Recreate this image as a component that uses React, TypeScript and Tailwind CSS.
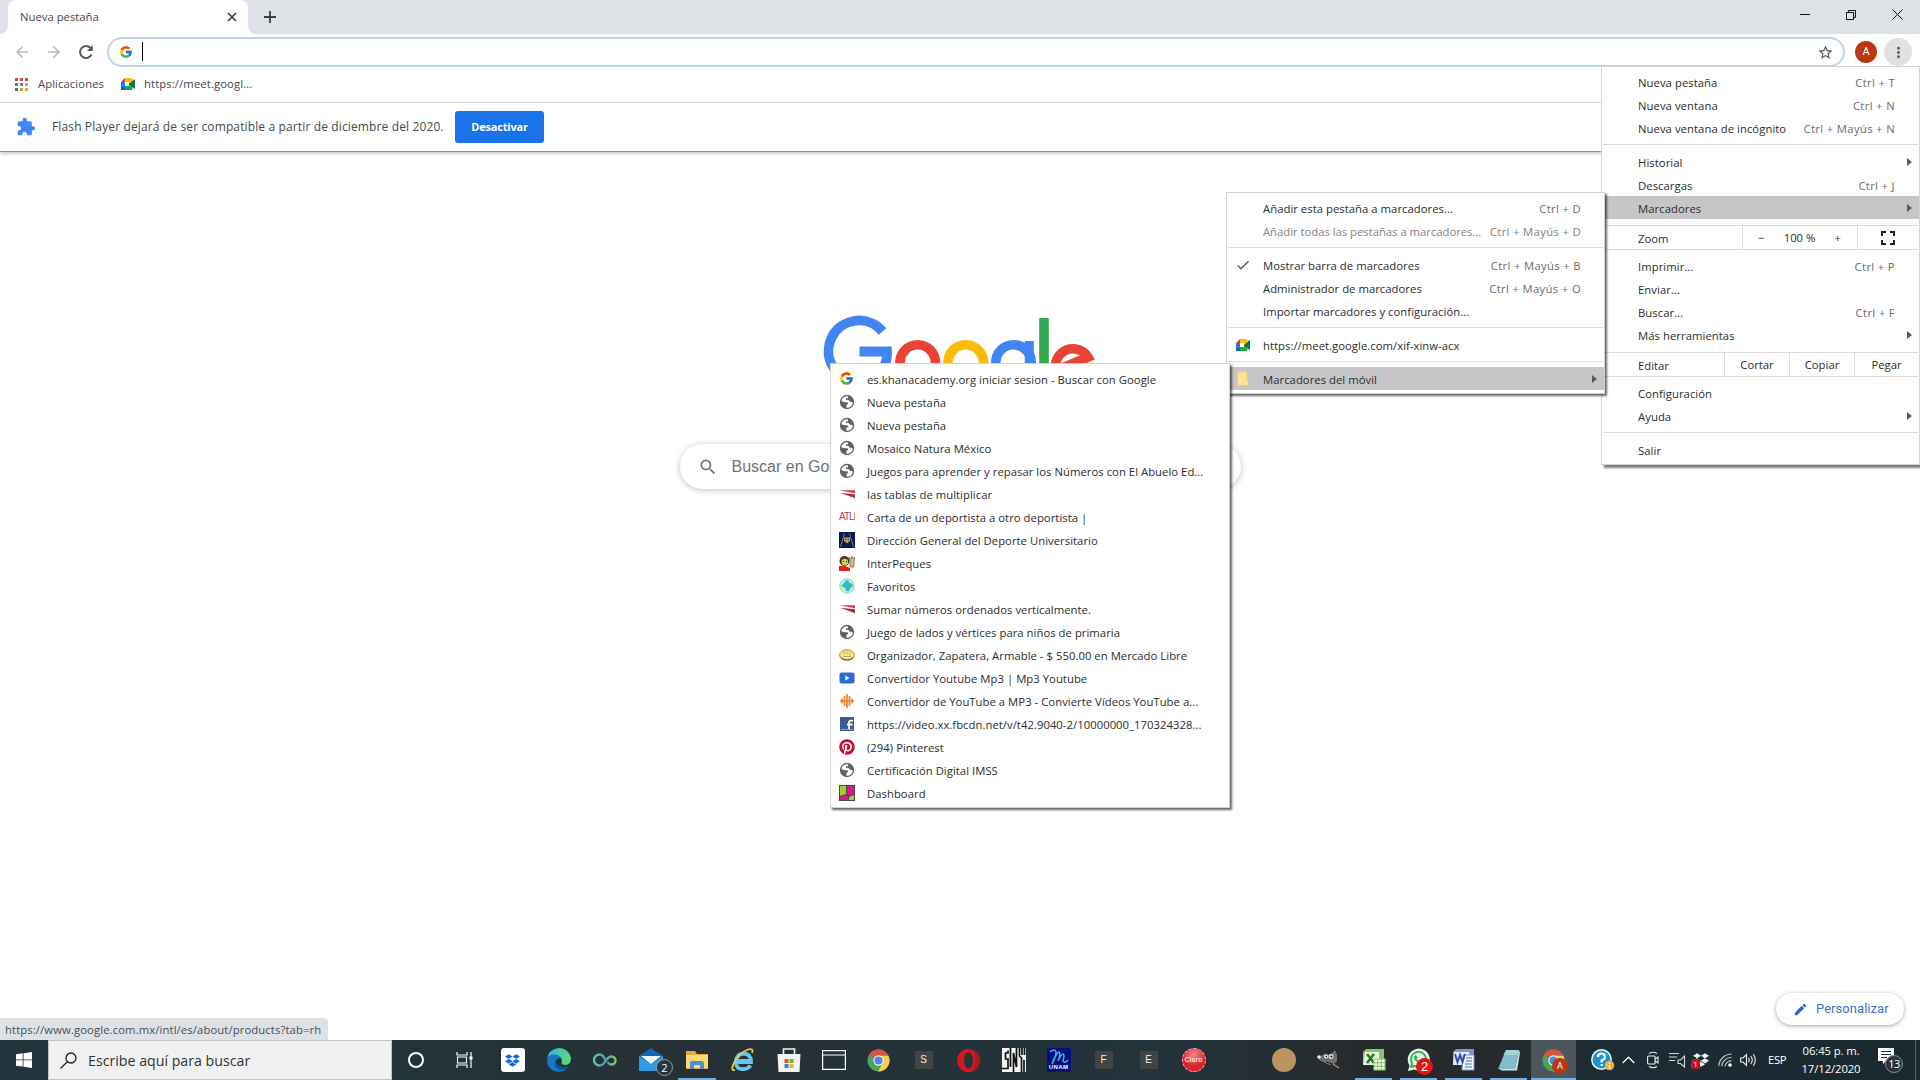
import React from "react";
import { FcGoogle } from "react-icons/fc";
import { FaDropbox, FaPinterest, FaWhatsapp } from "react-icons/fa";
import { MdSearch, MdStarBorder, MdEdit, MdExtension, MdCheck, MdArrowBack, MdArrowForward, MdMoreVert } from "react-icons/md";

const Meet = () => (
  <svg width="16" height="16" viewBox="0 0 16 16">
    <path d="M1 6 5 2v4z" fill="#e33b2e" />
    <path d="M5 2h6.5q1 0 1 1v4L9 9V6H5z" fill="#fbbc04" />
    <path d="M1 6h4v5H1z" fill="#2a74e8" />
    <path d="M1 11h4v3H2q-1 0-1-1z" fill="#1859c4" />
    <path d="M5 10h4V8l3.500-1v6q0 1-1 1H5z" fill="#1da64a" />
    <path d="M5 6h4v4H5z" fill="#fff" />
    <path d="M9 8l5-4.400q1-.6 1 .4v8q0 1-1 .4z" fill="#0c7a36" />
  </svg>
);

const ChromeLogo = ({ size = 22 }: { size?: number }) => (
  <svg width={size} height={size} viewBox="0 0 24 24">
    <circle cx="12" cy="12" r="11.5" fill="#4aa458" />
    <path d="M12 12 2 6.300A11.500 11.500 0 0 1 22 6.300L22.500 7H12z" fill="#d95246" />
    <path d="M12 7h10.400A11.500 11.500 0 0 1 11.500 23.500L16.500 14.500z" fill="#f7cf4d" />
    <circle cx="12" cy="12" r="5.400" fill="#f3f3f3" />
    <circle cx="12" cy="12" r="4.200" fill="#4a88ea" />
  </svg>
);

const Globe = () => (
  <svg width="16" height="16" viewBox="0 0 16 16">
    <circle cx="8" cy="8" r="7.200" fill="#5f6368" />
    <path d="M9 2.300C5.500 2 2.800 4 2.300 7.200L6 8.200h2.500l1 1.800-2 .8v2.900c3.600.2 6.200-2 6.300-5.500L11 7.800 9.500 6H7V4.600h2z" fill="#fff" />
  </svg>
);

const RedFlag = () => (
  <svg width="16" height="16" viewBox="0 0 16 16">
    <path d="M0 4.200h16v3z" fill="#c8404c" />
    <path d="M1 6.700 16 8.300v4z" fill="#b52f3d" />
  </svg>
);

const Atl = () => (
  <span className="block w-4 overflow-hidden whitespace-nowrap font-['Liberation_Sans'] text-[10px] leading-4 tracking-[-1px] text-[#b5424c]">ATLI</span>
);

const Unam = () => (
  <svg width="16" height="16" viewBox="0 0 16 16">
    <rect width="16" height="16" fill="#0c1b4b" />
    <path d="M1.500 15 5.500 1.500M14.500 15 10.500 1.500" stroke="#8d9a9c" strokeWidth=".8" />
    <path d="M5 5.500h6v3l-3 3-3-3z" fill="#c5a25e" />
    <path d="M6 7.500h1.300M8.800 7.500H10" stroke="#0c1b4b" />
  </svg>
);

const Peques = () => (
  <svg width="16" height="16" viewBox="0 0 16 16">
    <path d="M0 11h6l5 2v3H0z" fill="#e32119" />
    <circle cx="5.500" cy="6" r="5" fill="#3b3a20" />
    <circle cx="5.800" cy="7" r="3.300" fill="#d7c86b" />
    <path d="M4 6.500h1M7 6.500h1" stroke="#222" />
    <path d="M11 12V6l-1-4 2 2 1-3 1 3 2-2-1 5v5z" fill="#d8bd7d" stroke="#5c5133" strokeWidth=".6" />
  </svg>
);

const Fav = () => (
  <svg width="16" height="16" viewBox="0 0 16 16">
    <circle cx="8" cy="8" r="7.300" fill="#d5efb5" stroke="#8bdcd2" />
    <path d="M6 3q2-2 4 0v2q4 0 4 3l-3 2.500-1 3-3-.5-1-3-4-2 3-3z" fill="#25bfd3" />
  </svg>
);

const Mercado = () => (
  <svg width="16" height="16" viewBox="0 0 16 16">
    <ellipse cx="8" cy="8" rx="7.600" ry="5.300" fill="#efdd56" stroke="#a79a3c" strokeWidth=".8" />
    <path d="M2.500 6.500 6 7l2-1.500L10 7l3.500-.5v2L11 11l-3 1-3-1-2.500-2.500z" fill="#fafae8" />
    <path d="M5 6v3M8 5.500v3M11 6v3M4 9.500h8" stroke="#a79a3c" strokeWidth=".8" />
    <path d="M1.500 10.500q6.500 5 13 0" stroke="#54513e" strokeWidth="1" fill="none" />
  </svg>
);

const BluePlay = () => (
  <svg width="16" height="16" viewBox="0 0 16 16">
    <rect x=".5" y="2.500" width="15" height="11" rx="2" fill="#2c6bdb" />
    <path d="M6.300 5.500v5L10.500 8z" fill="#fff" />
  </svg>
);

const Wave = () => (
  <svg width="16" height="16" viewBox="0 0 16 16">
    <path d="M.8 8h14.400M3 5.500v5M5.500 3v10M8 1v14M10.500 3v10M13 5.500v5" stroke="#ef8328" strokeWidth="1.700" />
  </svg>
);

const Facebook = () => (
  <svg className="ml-px" width="14" height="14" viewBox="0 0 14 14">
    <rect width="14" height="14" fill="#3d5a98" />
    <path d="M9 12.500V5.700q0-2 2.300-2H13M7 7.500h5.500" stroke="#fff" strokeWidth="1.800" fill="none" />
    <path d="M1 12.500h12" stroke="#9db0d5" strokeWidth=".8" />
  </svg>
);

const Dash = () => (
  <svg width="16" height="16" viewBox="0 0 16 16">
    <rect width="16" height="16" fill="#4a4a3c" />
    <path d="M1 1h6v8L1 11z" fill="#a7cb3b" />
    <path d="M8 1h7v8l-4 2-3-2z" fill="#e2118d" />
    <path d="M1 12l6-2 2 1v4H1z" fill="#e2118d" />
    <path d="M10 12l5-2v5h-5z" fill="#a7cb3b" />
  </svg>
);

const Folder = () => (
  <svg className="ml-0.5" width="12" height="15" viewBox="0 0 12 15">
    <path d="M.5.5h9.500v9.500l1.500 1v3.500H.5z" fill="#fde38d" stroke="#eccb6a" />
  </svg>
);

const Arrow = () => (
  <svg width="5" height="8" viewBox="0 0 5 8"><path d="M0 0l5 4-5 4z" fill="#5a5a5a" /></svg>
);

const Sep = () => <div className="my-[5px] mx-px h-px shrink-0 bg-[#dcdcdd]" />;

type RowProps = { label: string; keys?: string; arrow?: boolean; on?: boolean; dim?: boolean; icon?: React.ReactNode };

const MainRow = ({ label, keys, arrow, on }: RowProps) => (
  <div className={`flex h-[23px] shrink-0 items-center whitespace-nowrap pl-[36px] ${on ? "bg-[#c6c6c8]" : ""}`}>
    <span className="grow pt-0.5 tracking-[0.05px]">{label}</span>
    {keys && <span className="pr-[24px] pt-0.5 tracking-[0.33px] text-[#6b6b6d]">{keys}</span>}
    {arrow && <span className="pr-[7px]"><Arrow /></span>}
  </div>
);

const SubRow = ({ label, keys, arrow, on, dim, icon }: RowProps) => (
  <div className={`flex h-[23px] shrink-0 items-center whitespace-nowrap ${on ? "bg-[#c6c6c8]" : ""}`}>
    <span className="flex w-[36px] shrink-0 items-center pl-[8px]">{icon}</span>
    <span className={`grow pt-0.5 ${dim ? "tracking-[-0.02px] text-[#828284]" : "tracking-[0.03px]"}`}>{label}</span>
    {keys && <span className={`pr-[23px] pt-0.5 tracking-[0.33px] ${dim ? "text-[#828284]" : "text-[#6b6b6d]"}`}>{keys}</span>}
    {arrow && <span className="pr-[7px]"><Arrow /></span>}
  </div>
);

const bookmarks: [React.ReactNode, string][] = [
  [<FcGoogle size={15} />, "es.khanacademy.org iniciar sesion - Buscar con Google"],
  [<Globe />, "Nueva pestaña"],
  [<Globe />, "Nueva pestaña"],
  [<Globe />, "Mosaico Natura México"],
  [<Globe />, "Juegos para aprender y repasar los Números con El Abuelo Ed..."],
  [<RedFlag />, "las tablas de multiplicar"],
  [<Atl />, "Carta de un deportista a otro deportista |"],
  [<Unam />, "Dirección General del Deporte Universitario"],
  [<Peques />, "InterPeques"],
  [<Fav />, "Favoritos"],
  [<RedFlag />, "Sumar números ordenados verticalmente."],
  [<Globe />, "Juego de lados y vértices para niños de primaria"],
  [<Mercado />, "Organizador, Zapatera, Armable - $ 550.00 en Mercado Libre"],
  [<BluePlay />, "Convertidor Youtube Mp3 | Mp3 Youtube"],
  [<Wave />, "Convertidor de YouTube a MP3 - Convierte Vídeos YouTube a..."],
  [<Facebook />, "https://video.xx.fbcdn.net/v/t42.9040-2/10000000_170324328..."],
  [<FaPinterest size={16} color="#c8102e" />, "(294) Pinterest"],
  [<Globe />, "Certificación Digital IMSS"],
  [<Dash />, "Dashboard"],
];

const GoogleLogo = () => (
  <svg width="272" height="92" viewBox="823 315 272 92" fill="none">
    <path d="M882.500 331.500A30.500 30.500 0 1 0 859 381.500A28 28 0 0 0 887 351.500H859.500" stroke="#4384f3" strokeWidth="9.800" />
    <circle cx="917.700" cy="362.500" r="17.700" stroke="#e94335" strokeWidth="9.600" />
    <circle cx="965.700" cy="362.500" r="17.700" stroke="#fbbc05" strokeWidth="9.600" />
    <circle cx="1013.500" cy="362.500" r="17.700" stroke="#4384f3" strokeWidth="9.600" />
    <path d="M1029.300 341v42q0 17-17 17-10 0-15-9" stroke="#4384f3" strokeWidth="9" />
    <path d="M1044 318v66" stroke="#34a853" strokeWidth="9.600" />
    <path d="M1060 369 1088 357.300A17.400 17.400 0 1 0 1089 373" stroke="#e94335" strokeWidth="9.600" />
  </svg>
);

const BG = "bg-[linear-gradient(90deg,#22353d_0%,#22343b_20%,#263136_35%,#22333b_60%,#262a2c_72%,#262a2c_78%,#1b2c35_84%,#1b2930_100%)]";

const Slot = ({ w, children, run, active }: { w: "a" | "b" | "c"; children?: React.ReactNode; run?: boolean; active?: boolean }) => (
  <div className={`relative flex h-10 shrink-0 items-center justify-center ${w === "a" ? "w-[48px]" : w === "b" ? "w-[46px]" : "w-[45px]"} ${active ? "bg-[#4c565c]" : ""}`}>
    {children}
    {run && <span className={`absolute bottom-0 h-[2px] bg-[#76aee3] ${active ? "inset-x-0" : "inset-x-[4px]"}`} />}
  </div>
);

const Letter = ({ c }: { c: string }) => (
  <span className="flex size-[18px] items-center justify-center bg-[#434343] font-['Liberation_Sans'] text-[10px] text-[#f0f0f0]">{c}</span>
);

export default function App() {
  return (
    <div className="relative flex h-[1080px] w-[1920px] flex-col overflow-hidden bg-white font-['Open_Sans','Noto_Sans',sans-serif] text-[11.3px] leading-4 text-[#2c2c2e]">
      {/* Tab strip */}
      <div className="flex h-[34px] shrink-0 bg-[#dee1e6]">
        <div className="flex w-2 items-end bg-white"><div className="h-full w-full rounded-br-lg bg-[#dee1e6]" /></div>
        <div className="flex w-[240px] items-center justify-between rounded-t-lg bg-white pl-3 pr-[11px] text-[#45494d]">
          <span>Nueva pestaña</span>
          <svg width="10" height="10" viewBox="0 0 10 10"><path d="M1 1l8 8M9 1l-8 8" stroke="#3c4043" strokeWidth="1.700" /></svg>
        </div>
        <div className="flex w-2 bg-white"><div className="h-full w-full rounded-bl-lg bg-[#dee1e6]" /></div>
        <div className="flex grow items-center pl-2">
          <svg width="12" height="12" viewBox="0 0 12 12"><path d="M6 0v12M0 6h12" stroke="#3c4043" strokeWidth="1.800" /></svg>
        </div>
        <svg className="mt-[9px] mr-[17px]" width="103" height="11" viewBox="0 0 103 11" fill="none" stroke="#111" strokeWidth="1">
          <path d="M0 5.500h10M46.500 3.500h7v7h-7zM48.500 3.500v-2h7v7h-2M92.500.5l10 10M102.500.5l-10 10" />
        </svg>
      </div>
      {/* Toolbar */}
      <div className="flex h-[36px] shrink-0 items-center pl-[13px] pr-[7px]">
        <MdArrowBack size={18} color="#b7b9bb" />
        <MdArrowForward size={18} color="#b7b9bb" className="ml-[14px]" />
        <svg className="ml-[15px]" width="16" height="16" viewBox="0 0 16 16"><path d="M13.500 10.500A6 6 0 1 1 12.500 4" fill="none" stroke="#54585c" strokeWidth="2" /><path d="M14.800 1v6H9z" fill="#54585c" /></svg>
        <div className="ml-[13px] flex h-[30px] w-[1738px] items-center rounded-full border-2 border-[#c1d4e7] pl-[10px] pr-[9px]">
          <FcGoogle size={14} />
          <div className="ml-[9px] h-[19px] w-px -translate-y-px bg-black" />
          <MdStarBorder size={17} color="#54585c" className="ml-auto" />
        </div>
        <div className="ml-[10px] flex size-[22px] items-center justify-center rounded-full bg-[#b93712] font-['Roboto'] text-[11px] text-white">A</div>
        <div className="ml-[7px] flex size-[28px] items-center justify-center rounded-full bg-[#e1e1e2]"><MdMoreVert size={17} color="#54585c" /></div>
      </div>
      {/* Bookmarks bar */}
      <div className="flex h-[33px] shrink-0 items-center border-b border-[#dadce0] pl-[15px] pb-[4px] text-[#45494d]">
        <svg width="13" height="13" viewBox="0 0 13 13">
          <path d="M0 0h3v3H0zM5 0h3v3H5zM10 0h3v3h-3z" fill="#c94f43" />
          <path d="M0 5h3v3H0zM0 10h3v3H0z" fill="#3f8c53" /><path d="M5 5h3v3H5z" fill="#4a7fe0" />
          <path d="M10 5h3v3h-3zM5 10h3v3H5zM10 10h3v3h-3z" fill="#dba32c" />
        </svg>
        <span className="ml-[10px] w-[66px] whitespace-nowrap tracking-[0.07px]">Aplicaciones</span>
        <span className="ml-4"><Meet /></span>
        <span className="ml-2 tracking-[0.1px]">https://meet.googl...</span>
      </div>
      {/* Info bar */}
      <div className="flex h-[49px] shrink-0 items-center border-b border-[#8e9194] pl-[16px] shadow-[0_2px_3px_rgba(0,0,0,0.2)]">
        <MdExtension size={20} color="#4285f4" />
        <span className="ml-4 w-[403px] whitespace-nowrap text-[12px] tracking-[0.13px] text-[#45494d]">Flash Player dejará de ser compatible a partir de diciembre del 2020.</span>
        <button className="h-8 w-[89px] rounded-[3px] bg-[#1a73e8] text-[11px] font-bold tracking-[-0.2px] text-white">Desactivar</button>
      </div>
      {/* New tab page */}
      <div className="flex min-h-0 grow flex-col items-center">
        <div className="mt-[163px] mr-[2px]"><GoogleLogo /></div>
        <div className="mt-[37px] flex h-[45px] w-[561px] items-center rounded-full pl-[18px] font-['Liberation_Sans'] text-[16px] text-[#6f7377] shadow-[0_1px_6px_rgba(32,33,36,0.28)]">
          <MdSearch size={20} color="#6f7377" /><span className="ml-[14px]">Buscar en Google o escribe una URL</span>
        </div>
        <div className="mt-auto flex w-full items-end justify-between">
          <div className="h-[22px] w-[328px] whitespace-nowrap rounded-tr bg-[#dee1e6] pl-[5px] pt-1 tracking-[0.1px] text-[#4a4e52]">https://www.google.com.mx/intl/es/about/products?tab=rh</div>
          <div className="mb-[15px] mr-4 flex h-8 w-[128px] items-center rounded-full pl-[17px] font-['Roboto'] text-[13px] text-[#3c70c8] shadow-[0_1px_4px_rgba(0,0,0,0.35)]">
            <MdEdit size={15} color="#1c6bd3" /><span className="ml-2 tracking-[0.05px]">Personalizar</span>
          </div>
        </div>
      </div>

      {/* Taskbar */}
      <div className={`flex h-10 shrink-0 ${BG}`}>
        <div className="flex w-12 items-center justify-center">
          <svg width="16" height="16" viewBox="0 0 16 16" fill="#fff"><path d="M0 2.200 6.700 1.300v6.200H0zM7.500 1.200 16 0v7.500H7.500zM0 8.300h6.700v6.300L0 13.700zM7.500 8.300H16V16l-8.500-1.200z" /></svg>
        </div>
        <div className="flex w-[344px] items-center border border-[#c0c2c3] bg-[#f1f1f1] pl-[11px] text-[14.2px] text-[#333]">
          <svg width="17" height="17" viewBox="0 0 17 17" fill="none" stroke="#222" strokeWidth="1.300"><circle cx="11" cy="6" r="5" /><path d="M7.500 9.500.5 16.500" /></svg>
          <span className="ml-[11px] pt-0.5">Escribe aquí para buscar</span>
        </div>
        <Slot w="a"><span className="size-4 rounded-full border-2 border-white" /></Slot>
        <Slot w="a">
          <svg width="17" height="16" viewBox="0 0 17 16" fill="none" stroke="#fff" strokeWidth="1.200"><path d="M1 0v3h10V0M1.500 5h9v6h-9zM1 16v-3h10v3M15 0v16" /><path d="M13.500 4.500h3v3h-3z" fill="#fff" stroke="none" /></svg>
        </Slot>
        <Slot w="a"><span className="ml-px flex size-6 items-center justify-center rounded-[3px] bg-white"><FaDropbox size={15} color="#1664e8" /></span></Slot>
        <Slot w="b">
          <svg width="24" height="24" viewBox="0 0 24 24">
            <defs><linearGradient id="edge" x1="0" y1="0" x2="1" y2="0.400"><stop offset="0" stopColor="#35b6e8" /><stop offset="1" stopColor="#5bd67a" /></linearGradient></defs>
            <path d="M12 0a12 12 0 0 1 12 10q0 6-5 7-6 0-4-4 0-5-7-5T0 12Q1 1 12 0z" fill="url(#edge)" />
            <path d="M0 12q1-6 7-5.500 6 0 7 4-6-1-5.500 5Q10 24 20 20q-4 5-11 3.500Q0 21 0 12z" fill="#1878c8" />
            <path d="M8.500 12.500Q6 20 13 22q6 0 9-4-8 3-12-2-1.500-2-1.500-3.500z" fill="#10539c" />
          </svg>
        </Slot>
        <Slot w="b">
          <svg width="25" height="14" viewBox="0 0 25 14" fill="none" strokeWidth="2.400">
            <defs><linearGradient id="inf" gradientUnits="userSpaceOnUse" x1="0" y1="0" x2="25" y2="0"><stop offset="0" stopColor="#6cc0a6" /><stop offset=".5" stopColor="#4f9fb0" /><stop offset="1" stopColor="#a4c95a" /></linearGradient></defs>
            <path d="M12.500 7Q10 1.500 6.500 1.500a5.300 5.300 0 0 0 0 11Q10 12.500 12.500 8 15.500 3.500 18.500 3.500a4 4 0 0 1 0 8Q16 11.500 14.500 9" stroke="url(#inf)" />
          </svg>
        </Slot>
        <Slot w="b">
          <svg width="24" height="24" viewBox="0 0 24 24"><path d="M0 8 12 0l12 8v14H0z" fill="#1467ab" /><path d="M0 8l12 8L24 8v15H0z" fill="#2f9ae0" /><path d="M2 8h20l-10 8z" fill="#f1f5f8" /></svg>
          <span className="absolute left-[28px] top-[19px] flex size-[17px] items-center justify-center rounded-full border border-[#929a9e] bg-[#29343a] text-[11px] text-white">2</span>
        </Slot>
        <Slot w="b" run>
          <svg width="22" height="20" viewBox="0 0 22 20"><path d="M0 1h9l2 3h11v15H0z" fill="#e5ac3b" /><path d="M0 5h22v13H0z" fill="#fcd976" /><path d="M4 19v-6q0-2 2-2h10q2 0 2 2v6h-4v-4H8v4z" fill="#4a92cf" /></svg>
        </Slot>
        <Slot w="b">
          <svg width="24" height="24" viewBox="0 0 24 24" fill="none"><path d="M5 14h15q0-8-7-8.500Q5 6 5 14t8 7q4 0 6.500-3.500M6 13h13" stroke="#62c5f2" strokeWidth="3.800" /><path d="M4 22Q-1 23 3 15 8 5 17 1.500q6-1.500 4 3.500" stroke="#e8c84b" strokeWidth="1.800" /></svg>
        </Slot>
        <Slot w="b">
          <svg className="-ml-px" width="24" height="24" viewBox="0 0 24 24"><path d="M6.500 6V1h11v5" stroke="#f3f3f3" strokeWidth="1.600" fill="none" /><path d="M0.500 6h23l-1 18h-21z" fill="#f3f3f3" /><path d="M7.500 11h4v4h-4z" fill="#e2513c" /><path d="M12.500 11h4v4h-4z" fill="#7ab342" /><path d="M7.500 16h4v4h-4z" fill="#2f86d6" /><path d="M12.500 16h4v4h-4z" fill="#f0b429" /></svg>
        </Slot>
        <div className="-ml-px flex">
          <Slot w="c"><svg width="24" height="20" viewBox="0 0 24 20" fill="none" stroke="#fff" strokeWidth="1.200"><path d="M.6.6h22.800v18.800H.6zM.6 5h22.800" /></svg></Slot>
          <Slot w="c"><ChromeLogo size={23} /></Slot>
          <Slot w="c"><Letter c="S" /></Slot>
          <Slot w="c"><svg width="23" height="23" viewBox="0 0 23 23"><ellipse cx="11.500" cy="11.500" rx="11.300" ry="11.500" fill="#d8161f" /><path d="M11.500 0q11 1 11.300 11.500-.3 10.500-11.300 11.500 7-1 7-11.500T11.500 0z" fill="#a81c1c" /><ellipse cx="11.500" cy="11.500" rx="4.500" ry="8.300" fill="#26333a" /></svg></Slot>
          <Slot w="c">
            <svg width="24" height="24" viewBox="0 0 24 24"><rect width="24" height="24" fill="#f5f5f5" /><path d="M6 2.500v2.500H3.500v6H6v9.500H0M8.500 0v19M11.500 24V5l3 14V0M17.500 0v8l2 2v14M20 0v7M22.500 0v7M22 12v12" fill="none" stroke="#111" strokeWidth="1.700" /></svg>
          </Slot>
          <Slot w="c">
            <span className="flex size-6 flex-col items-center bg-[#03107b]">
              <svg width="20" height="17" viewBox="0 0 20 17" fill="none" stroke="#3cb3dc" strokeWidth="1.500"><path d="M1 4q5-4 6 0 0 5-4 12Q7 5 10 4q2 1-1 9 3-7 5-7 2 1 0 7 1 3 5-1" /></svg>
              <span className="font-['Liberation_Sans'] text-[6px] font-bold leading-[5px] tracking-[0.4px] text-white">UNAM</span>
            </span>
          </Slot>
          <Slot w="c"><Letter c="F" /></Slot>
          <Slot w="c"><Letter c="E" /></Slot>
          <Slot w="c">
            <span className="flex size-6 items-center justify-center rounded-full border border-dashed border-[#e7b0b0] bg-[radial-gradient(circle_at_50%_25%,#f3888a,#d8252c_60%)] font-['Liberation_Sans'] text-[7px] font-bold text-[#ffd6d6]">Claro</span>
          </Slot>
          <Slot w="c" />
          <Slot w="c"><span className="size-6 rounded-full bg-[#b89562]" /></Slot>
          <Slot w="c">
            <svg width="24" height="20" viewBox="0 0 24 20"><path d="M1 6 5 5.500l3-2 5 1.500 5-5 2 5v6l-3 3-5 1-6-3-4-2z" fill="#72706b" /><circle cx="9" cy="6.500" r="2" fill="#eee" /><circle cx="14" cy="6.500" r="2.400" fill="#eee" /><circle cx="9.300" cy="6.500" r=".8" /><circle cx="14.300" cy="6.500" r="1" /><circle cx="2" cy="7" r="1.800" fill="#eee" /><path d="M9 12l9 3" stroke="#222" /><path d="M16 14l6 4" stroke="#b5885a" strokeWidth="1.500" /></svg>
          </Slot>
          <Slot w="c" run>
            <svg width="24" height="24" viewBox="0 0 24 24"><path d="M4 1h18v15H1V4z" fill="#8bc169" /><path d="M3 4h14v13H1z" fill="#e9f4e0" /><path d="M5 6l7 9M12 6l-7 9" stroke="#277a2b" strokeWidth="2.600" /><path d="M12 11h11v11H12zM12 14.700h11M12 18.300h11M15.700 11v11M19.300 11v11" fill="#f5fbf2" stroke="#8fc472" strokeWidth="1.200" /></svg>
          </Slot>
          <Slot w="c" run>
            <svg width="24" height="24" viewBox="0 0 24 24"><path d="M1 23l1.500-5.500A11 11 0 1 1 7 21.500z" fill="#f2f8f2" /></svg>
            <span className="absolute left-[13px] top-[10px]"><FaWhatsapp size={19} color="#28b446" strokeWidth="20" stroke="#28b446" /></span>
            <span className="absolute left-[20px] top-[18px] flex size-[17px] items-center justify-center rounded-full bg-[#e3151b] font-['Liberation_Sans'] text-[13px] text-white">2</span>
          </Slot>
          <Slot w="c" run>
            <svg width="24" height="24" viewBox="0 0 24 24"><path d="M4 1h18v15H1V4z" fill="#7c97cf" /><path d="M2 4h15v13H1z" fill="#e4eaf7" /><path d="M11 7h11v15H10z" fill="#f4f7fd" stroke="#7c97cf" /><path d="M3 6l2.500 8L8 7l2.500 7L13 6" fill="none" stroke="#2c4fa3" strokeWidth="2" /><path d="M14 10h6M14 13h6M13 16h7M13 19h7" stroke="#3f62b0" /></svg>
          </Slot>
          <Slot w="c" run>
            <svg width="24" height="24" viewBox="0 0 24 24"><path d="M9 2h13l-4 19H1z" fill="#82bcc8" /><path d="M9 2h13l-1 5H6.500z" fill="#a6d3da" /><path d="M22 2.500l1 2-3 18H5l-3-1.500h16z" fill="#d5e2e4" /></svg>
          </Slot>
          <Slot w="c" run active>
            <ChromeLogo size={23} />
            <span className="absolute left-[21px] top-[18px] flex size-4 items-center justify-center rounded-full bg-[#b93712] font-['Roboto'] text-[9px] text-white">A</span>
          </Slot>
        </div>

        {/* Notification area */}
        <div className="flex grow items-center pl-[15px] text-white">
          <svg width="24" height="22" viewBox="0 0 24 22"><circle cx="10.500" cy="10.500" r="9.700" fill="#1d93cf" stroke="#e9f4fa" strokeWidth="1.500" /><path d="M7 8q0-3.300 3.500-3.300T14 8q0 2-3.300 3.500v2M10.700 15v2" stroke="#fff" strokeWidth="2.200" fill="none" /><circle cx="18.500" cy="16.500" r="4.800" fill="#eab148" /><path d="M18.500 14v1M18.500 16v3.500" stroke="#fff" strokeWidth="1.400" /></svg>
          <svg className="ml-[7px]" width="13" height="8" viewBox="0 0 13 8"><path d="M.7 7 6.500 1.200 12.300 7" fill="none" stroke="#fff" strokeWidth="1.300" /></svg>
          <svg className="ml-[12px]" width="12" height="18" viewBox="0 0 12 18" fill="none" stroke="#eee" strokeWidth="1.100"><rect x=".6" y="5" width="7.500" height="8" rx="1" /><path d="M8 8l3-2v6l-3-2M2 2.500q4-2.500 8 0M2 15.500q4 2.500 8 0" /></svg>
          <svg className="ml-[10px]" width="17" height="16" viewBox="0 0 17 16" fill="none" stroke="#d5d8da" strokeWidth="1.100"><path d="M0 1.500h10M0 5h8M0 8.500h6M9 8h2.500L15.500 4v11l-4-3.500H9z" /></svg>
          <span className="relative ml-[6px] flex size-[17px] items-center justify-center"><FaDropbox size={16} color="#fff" /><span className="absolute -left-px top-[7px] flex h-[10px] w-[9px] items-center justify-center rounded-[2px] bg-[#c8102e] text-[8px] leading-none">1</span></span>
          <svg className="ml-[9px]" width="14" height="14" viewBox="0 0 14 14" fill="none" stroke="#c2c7ca" strokeWidth="1.200"><path d="M.7 13A13 13 0 0 1 13.500 1M3.700 13.200A9.500 9.500 0 0 1 13.500 4.500M7 13.500A6 6 0 0 1 13.500 8" /><circle cx="12" cy="12" r="1.800" fill="#fff" stroke="none" /></svg>
          <svg className="ml-[8px]" width="17" height="14" viewBox="0 0 17 14" fill="none" stroke="#eee" strokeWidth="1.100"><path d="M.6 5H3l3.500-3.500v11L3 9H.6zM8.500 4.800q1.500 2.200 0 4.400M10.800 3q3 4 0 8M13.300 1.300q4 5.700 0 11.400" /></svg>
          <span className="ml-[11px] w-[20px] text-[11.300px] tracking-[-0.3px]">ESP</span>
          <div className="ml-[10px] flex w-[66px] flex-col items-center whitespace-nowrap pb-px text-[11.300px] leading-[18px] tracking-[-0.1px]"><span>06:45 p. m.</span><span>17/12/2020</span></div>
          <div className="relative ml-[13px] h-[26px] w-[26px]">
            <svg width="18" height="18" viewBox="0 0 18 18"><path d="M1 1h16v13H9l-3 3v-3H1z" fill="#fff" /><path d="M4 4.500h10M4 7.500h10M4 10.500h6" stroke="#1b2930" strokeWidth="1.200" /></svg>
            <span className="absolute left-[8px] top-[8px] flex size-[18px] items-center justify-center rounded-full border border-[#868d91] bg-[#2b3338] text-[11px] tracking-[-0.5px]">13</span>
          </div>
          <div className="ml-auto mr-1 h-10 w-px bg-[#59646a]" />
        </div>
      </div>

      {/* Browser menu */}
      <div className="absolute left-[1601px] top-[66px] flex h-[399px] w-[319px] flex-col border border-[#d3d4d6] bg-white pt-[3px] shadow-[3px_3px_2px_rgba(0,0,0,0.5)]">
        <MainRow label="Nueva pestaña" keys="Ctrl + T" />
        <MainRow label="Nueva ventana" keys="Ctrl + N" />
        <MainRow label="Nueva ventana de incógnito" keys="Ctrl + Mayús + N" />
        <Sep />
        <MainRow label="Historial" arrow />
        <MainRow label="Descargas" keys="Ctrl + J" />
        <MainRow label="Marcadores" arrow on />
        <div className="mx-px mt-[6px] flex h-[25px] shrink-0 items-center border-y border-[#dcdcdd] pl-[35px]">
          <span className="w-[104px] pt-0.5">Zoom</span>
          <div className="flex h-full w-[116px] items-center justify-between border-x border-[#dcdcdd] pl-[15px] pr-4"><span>−</span><span>100 %</span><span>+</span></div>
          <svg className="ml-[23px]" width="14" height="14" viewBox="0 0 14 14" fill="none" stroke="#222" strokeWidth="2"><path d="M1 5V1h4M9 1h4v4M13 9v4H9M5 13H1V9" /></svg>
        </div>
        <div className="h-1 shrink-0" />
        <MainRow label="Imprimir..." keys="Ctrl + P" />
        <MainRow label="Enviar..." />
        <MainRow label="Buscar..." keys="Ctrl + F" />
        <MainRow label="Más herramientas" arrow />
        <div className="mx-px mt-[6px] mb-1 flex h-[25px] shrink-0 items-center border-y border-[#dcdcdd] pl-[35px]">
          <span className="w-[86px] pt-0.5">Editar</span>
          <span className="flex h-full w-[65px] items-center justify-center border-l border-[#dcdcdd]">Cortar</span>
          <span className="flex h-full w-[65px] items-center justify-center border-l border-[#dcdcdd]">Copiar</span>
          <span className="flex h-full grow items-center justify-center border-l border-[#dcdcdd]">Pegar</span>
        </div>
        <MainRow label="Configuración" />
        <MainRow label="Ayuda" arrow />
        <Sep />
        <MainRow label="Salir" />
      </div>

      {/* Bookmarks submenu */}
      <div className="absolute left-[1226px] top-[192px] flex h-[202px] w-[379px] flex-col border border-[#d3d4d6] bg-white pt-[3px] shadow-[2px_2px_2px_rgba(0,0,0,0.6)]">
        <SubRow label="Añadir esta pestaña a marcadores..." keys="Ctrl + D" />
        <SubRow label="Añadir todas las pestañas a marcadores..." keys="Ctrl + Mayús + D" dim />
        <Sep />
        <SubRow label="Mostrar barra de marcadores" keys="Ctrl + Mayús + B" icon={<MdCheck size={16} color="#555" />} />
        <SubRow label="Administrador de marcadores" keys="Ctrl + Mayús + O" />
        <SubRow label="Importar marcadores y configuración..." />
        <Sep />
        <SubRow label="https://meet.google.com/xif-xinw-acx" icon={<Meet />} />
        <Sep />
        <SubRow label="Marcadores del móvil" arrow on icon={<Folder />} />
      </div>

      {/* Mobile bookmarks submenu */}
      <div className="absolute left-[830px] top-[363px] flex h-[445px] w-[400px] flex-col border border-[#d3d4d6] bg-white pt-[3px] shadow-[2px_2px_2px_rgba(0,0,0,0.6)]">
        {bookmarks.map(([icon, label], i) => <SubRow key={i} icon={icon} label={label} />)}
      </div>
    </div>
  );
}
